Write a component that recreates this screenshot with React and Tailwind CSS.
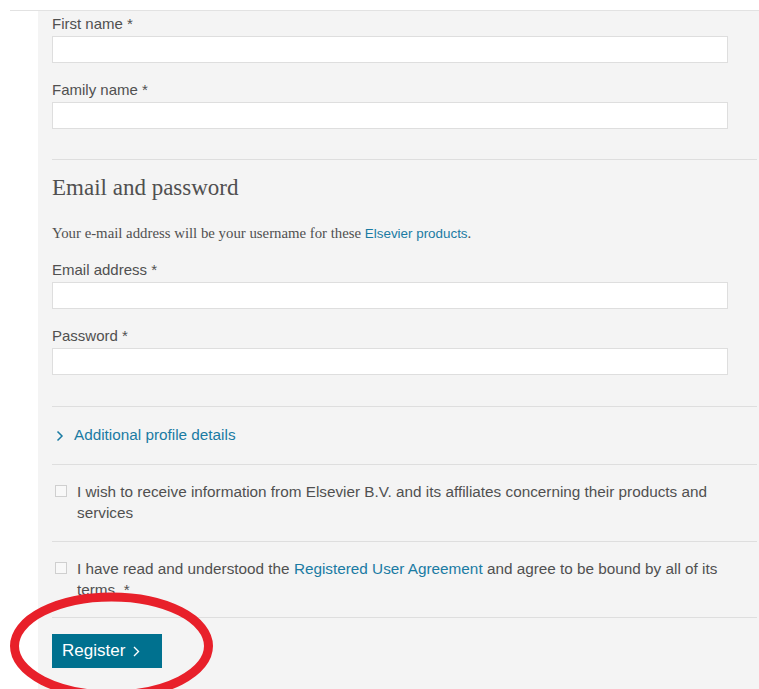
import React from 'react';

const sans = { fontFamily: '"Liberation Sans", Arial, sans-serif' };
const serif = { fontFamily: '"Liberation Serif", Georgia, serif' };

function Field({ label, className = '' }) {
  return (
    <div className={className}>
      <label className="block h-[18px] text-[15px] leading-[18px] text-[#505050]">{label} *</label>
      <input
        type="text"
        className="mt-[3px] block h-[27px] w-full border border-[#dedede] bg-white outline-none"
      />
    </div>
  );
}

function Checkbox({ children, className = '' }) {
  return (
    <div className={`flex items-start gap-[10px] pl-[3px] ${className}`}>
      <span className="mt-[4px] block h-[12px] w-[12px] shrink-0 border border-[#cfcfcf] bg-[#f8f8f8]" />
      <p className="text-[15.3px] leading-[21px] text-[#505050]">{children}</p>
    </div>
  );
}

export default function App() {
  return (
    <div className="relative h-[689px] w-[759px] overflow-hidden bg-white" style={sans}>
      <div className="ml-[10px] mt-[10px] border-t border-[#e2e2e2]" />
      <div className="ml-[38px] bg-[#f4f4f4] pb-[40px] pl-[14px]">
        <div className="pr-[31px] pt-[4px]">
          <Field label="First name" />
          <Field label="Family name" className="mt-[18px]" />
        </div>

        <div className="mr-[2px] mt-[30px] border-t border-[#dedede]" />

        <div className="pr-[31px]">
          <h2 className="mt-[14px] text-[23px] leading-[28px] text-[#505050]" style={serif}>
            Email and password
          </h2>
          <p className="mt-[22px] text-[14.8px] leading-[18px] text-[#505050]" style={serif}>
            Your e-mail address will be your username for these{' '}
            <a href="#" className="text-[13.4px] text-[#1a7ba3]" style={sans}>
              Elsevier products
            </a>
            .
          </p>
          <Field label="Email address" className="mt-[18px]" />
          <Field label="Password" className="mt-[18px]" />
        </div>

        <div className="mr-[2px] mt-[31px] border-t border-[#dedede]" />

        <a href="#" className="flex h-[57px] items-center gap-[10px] pl-[4px] text-[15.3px] text-[#1a7ba3]">
          <svg width="8" height="12" viewBox="0 0 8 12" fill="none" stroke="#1a7ba3" strokeWidth="1.5">
            <path d="M1.5 1.5 6 6l-4.5 4.5" />
          </svg>
          Additional profile details
        </a>

        <div className="mr-[2px] border-t border-[#dedede]" />

        <Checkbox className="pb-[18px] pr-[40px] pt-[16px]">
          I wish to receive information from Elsevier B.V. and its affiliates concerning their products and
          services
        </Checkbox>

        <div className="mr-[2px] border-t border-[#dedede]" />

        <Checkbox className="pb-[17px] pr-[30px] pt-[16px]">
          I have read and understood the{' '}
          <a href="#" className="text-[#1a7ba3]">
            Registered User Agreement
          </a>{' '}
          and agree to be bound by all of its terms. *
        </Checkbox>

        <div className="mr-[2px] border-t border-[#dedede]" />

        <button className="mt-[16px] flex h-[34px] w-[110px] items-center gap-[8px] bg-[#00718f] pl-[10px] text-[17px] text-white">
          Register
          <svg width="7" height="11" viewBox="0 0 7 11" fill="none" stroke="white" strokeWidth="1.4">
            <path d="M1 1l4.5 4.5L1 10" />
          </svg>
        </button>
      </div>

      {/* hand-drawn highlight round the submit button */}
      <svg className="pointer-events-none absolute left-0 top-0" width="759" height="689">
        <ellipse cx="111.5" cy="646" rx="97" ry="49" fill="none" stroke="#e8202a" strokeWidth="9" />
      </svg>
    </div>
  );
}
